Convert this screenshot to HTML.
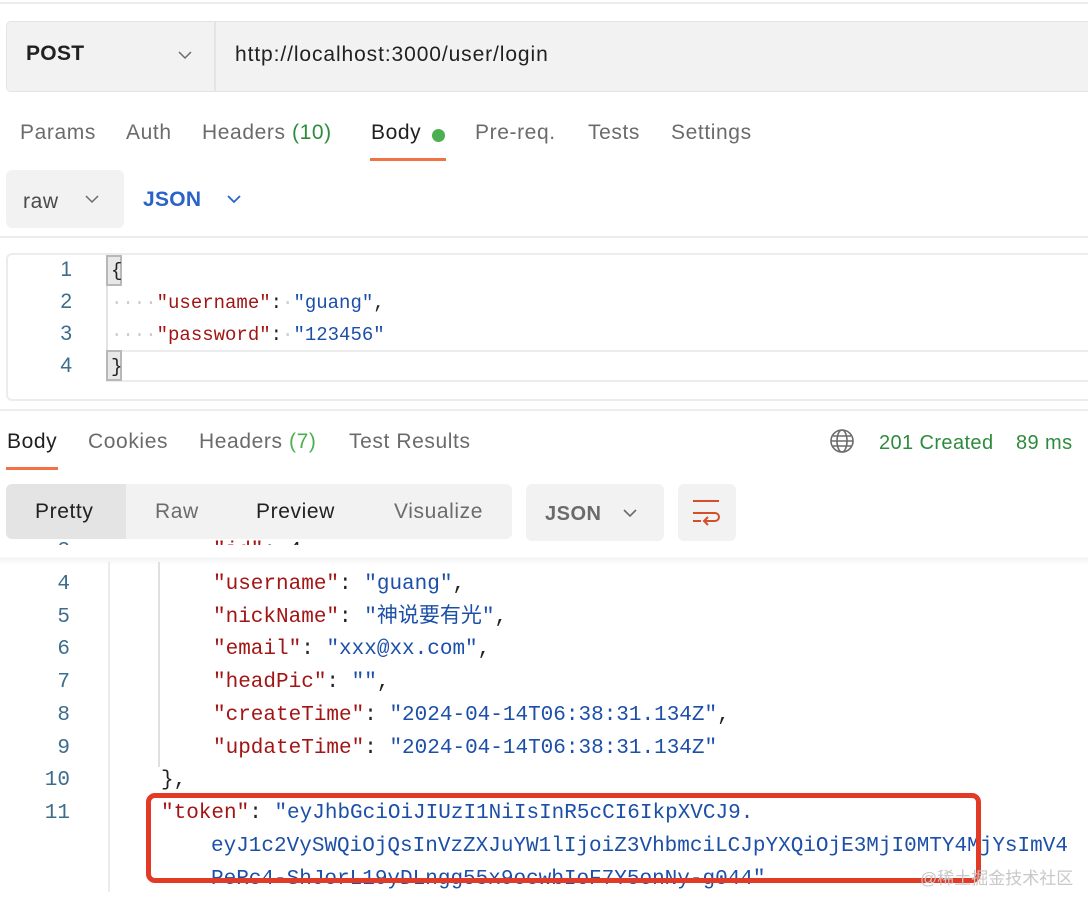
<!DOCTYPE html>
<html><head><meta charset="utf-8"><style>
*{margin:0;padding:0;box-sizing:border-box}
body{width:1088px;height:892px;background:#fff;position:relative;overflow:hidden;font-family:"Liberation Sans","Noto Sans CJK SC",sans-serif;color:#212121}
.a{position:absolute;white-space:nowrap}
.mono{font-family:"Liberation Mono","Noto Sans CJK SC",monospace}
.k{color:#a31515}.s{color:#1c4fa8}.ln{color:#3d6d8c;text-align:right;width:40px}
.t{font-size:21px;letter-spacing:0.6px}
.tab{font-size:21px;letter-spacing:0.6px;color:#6b6b6b}
</style></head><body>
<div class="a" style="left:0;top:2px;width:1088px;height:2px;background:#ececec"></div>
<div class="a" style="left:6px;top:21px;width:1090px;height:71px;background:#f2f2f2;border:1px solid #e4e4e4;border-radius:5px"></div>
<div class="a" style="left:214px;top:22px;width:2px;height:69px;background:#e4e4e4"></div>
<div class="a t" style="left:26px;top:42px;font-weight:bold;color:#212121;letter-spacing:0.3px">POST</div>
<svg class="a" style="left:177px;top:49px" width="16" height="12"><path d="M2 3l6 6 6-6" fill="none" stroke="#6b6b6b" stroke-width="1.5"/></svg>
<div class="a t" style="left:235px;top:43px;color:#212121;letter-spacing:0.9px">http://localhost:3000/user/login</div>
<div class="a tab" style="left:20px;top:121px">Params</div>
<div class="a tab" style="left:126px;top:121px">Auth</div>
<div class="a tab" style="left:202px;top:121px">Headers <span style="color:#2e8b3e">(10)</span></div>
<div class="a tab" style="left:371px;top:121px;color:#212121">Body</div>
<div class="a" style="left:432px;top:129px;width:13px;height:13px;border-radius:50%;background:#4caf50"></div>
<div class="a" style="left:370px;top:158px;width:76px;height:3px;background:#f07346"></div>
<div class="a tab" style="left:475px;top:121px">Pre-req.</div>
<div class="a tab" style="left:588px;top:121px">Tests</div>
<div class="a tab" style="left:671px;top:121px">Settings</div>
<div class="a" style="left:6px;top:170px;width:118px;height:58px;background:#f2f2f2;border-radius:6px"></div>
<div class="a t" style="left:23px;top:190px;color:#4a4a4a">raw</div>
<svg class="a" style="left:84px;top:193px" width="16" height="12"><path d="M2 3l6 6 6-6" fill="none" stroke="#6b6b6b" stroke-width="1.5"/></svg>
<div class="a t" style="left:143px;top:188px;font-weight:bold;color:#2a62c9;letter-spacing:0.3px">JSON</div>
<svg class="a" style="left:226px;top:193px" width="16" height="12"><path d="M2 3l6 6 6-6" fill="none" stroke="#2a62c9" stroke-width="1.8"/></svg>
<div class="a" style="left:0;top:236px;width:1088px;height:2px;background:#ececec"></div>
<div class="a" style="left:6px;top:253px;width:1090px;height:148px;border:2px solid #ececec;border-radius:6px"></div>
<div class="a" style="left:106px;top:350px;width:982px;height:2px;background:#ececec"></div>
<div class="a" style="left:106px;top:380px;width:982px;height:2px;background:#ececec"></div>
<div class="a" style="left:106px;top:256px;width:2px;height:124px;background:#e4e4e4"></div>
<div class="a" style="left:106px;top:255px;width:16px;height:31px;background:#e8e8e8;border:2px solid #b8b8b8"></div>
<div class="a" style="left:106px;top:350px;width:16px;height:31px;background:#e8e8e8;border:2px solid #b8b8b8"></div>
<div class="a" style="left:32px;top:254px;font-size:21px;line-height:32px">
<div class="ln">1</div><div class="ln">2</div><div class="ln">3</div><div class="ln">4</div></div>
<div class="a mono" style="left:111px;top:255px;font-size:19px;line-height:32px;color:#222">
<div>{</div>
<div><span style="color:#ccc">····</span><span class="k">"username"</span>:<span style="color:#ccc">·</span><span class="s">"guang"</span>,</div>
<div><span style="color:#ccc">····</span><span class="k">"password"</span>:<span style="color:#ccc">·</span><span class="s">"123456"</span></div>
<div>}</div></div>
<div class="a" style="left:0;top:409px;width:1088px;height:2px;background:#ececec"></div>
<div class="a tab" style="left:7px;top:430px;color:#212121">Body</div>
<div class="a" style="left:6px;top:467px;width:52px;height:3px;background:#f07346"></div>
<div class="a tab" style="left:88px;top:430px">Cookies</div>
<div class="a tab" style="left:199px;top:430px">Headers <span style="color:#4caf50">(7)</span></div>
<div class="a tab" style="left:349px;top:430px">Test Results</div>
<svg class="a" style="left:829px;top:428px" width="26" height="26" fill="none" stroke="#6b6b6b" stroke-width="1.6"><circle cx="13" cy="13" r="11"/><ellipse cx="13" cy="13" rx="5" ry="11"/><path d="M2 13h22M4 8h18M4 18h18"/></svg>
<div class="a" style="left:879px;top:432px;font-size:20px;letter-spacing:0.4px;color:#2e8b3e">201 Created</div>
<div class="a" style="left:1016px;top:432px;font-size:20px;letter-spacing:0.4px;color:#2e8b3e">89 ms</div>
<div class="a" style="left:6px;top:484px;width:506px;height:55px;background:#f2f2f2;border-radius:6px"></div>
<div class="a" style="left:6px;top:484px;width:120px;height:55px;background:#e4e4e4;border-radius:6px 0 0 6px"></div>
<div class="a t" style="left:35px;top:500px;color:#212121">Pretty</div>
<div class="a t" style="left:155px;top:500px;color:#6b6b6b">Raw</div>
<div class="a t" style="left:256px;top:500px;color:#212121">Preview</div>
<div class="a t" style="left:394px;top:500px;color:#6b6b6b">Visualize</div>
<div class="a" style="left:526px;top:484px;width:138px;height:57px;background:#f2f2f2;border-radius:6px"></div>
<div class="a" style="left:545px;top:503px;font-size:20px;letter-spacing:0.5px;font-weight:bold;color:#6b6b6b">JSON</div>
<svg class="a" style="left:622px;top:507px" width="16" height="12"><path d="M2 3l6 6 6-6" fill="none" stroke="#6b6b6b" stroke-width="1.6"/></svg>
<div class="a" style="left:678px;top:484px;width:58px;height:57px;background:#f2f2f2;border-radius:6px"></div>
<svg class="a" style="left:690px;top:498px" width="34" height="30" fill="none" stroke="#d2512a" stroke-width="2"><path d="M3 3h26M3 15h22a4 4 0 0 1 0 8h-10M3 23h8M18 19l-4 4 4 4"/></svg>
<div class="a mono" style="left:213px;top:536px;font-size:21px;line-height:32.7px;color:#222"><span class="k">"id"</span>: 4,</div>
<div class="a ln mono" style="left:30px;top:536px;font-size:21px;line-height:32.7px">3</div>
<div class="a" style="left:0;top:545px;width:1088px;height:20px;background:linear-gradient(#fff 0,#fff 12px,#f3f3f3 13px,#fff 20px)"></div>
<div class="a" style="left:108px;top:562px;width:2px;height:330px;background:#ececec"></div>
<div class="a" style="left:158px;top:562px;width:2px;height:205px;background:#e0e0e0"></div>
<div class="a mono" style="left:30px;top:569px;font-size:21px;line-height:32.7px">
<div class="ln">4</div><div class="ln">5</div><div class="ln">6</div><div class="ln">7</div><div class="ln">8</div><div class="ln">9</div><div class="ln">10</div><div class="ln">11</div></div>
<div class="a mono" style="left:213px;top:569px;font-size:21px;line-height:32.7px;color:#222">
<div><span class="k">"username"</span>: <span class="s">"guang"</span>,</div>
<div><span class="k">"nickName"</span>: <span class="s">"神说要有光"</span>,</div>
<div><span class="k">"email"</span>: <span class="s">"xxx@xx.com"</span>,</div>
<div><span class="k">"headPic"</span>: <span class="s">""</span>,</div>
<div><span class="k">"createTime"</span>: <span class="s">"2024-04-14T06:38:31.134Z"</span>,</div>
<div><span class="k">"updateTime"</span>: <span class="s">"2024-04-14T06:38:31.134Z"</span></div></div>
<div class="a mono" style="left:161px;top:765px;font-size:21px;line-height:32.7px;color:#222">},</div>
<div class="a mono" style="left:161px;top:798px;font-size:21px;line-height:32.7px;color:#222"><span class="k">"token"</span>: <span class="s">"eyJhbGciOiJIUzI1NiIsInR5cCI6IkpXVCJ9.</span></div>
<div class="a mono s" style="left:211px;top:831px;font-size:21px;line-height:32.7px">eyJ1c2VySWQiOjQsInVzZXJuYW1lIjoiZ3VhbmciLCJpYXQiOjE3MjI0MTY4MjYsImV4</div>
<div class="a mono s" style="left:211px;top:864px;font-size:21px;line-height:32.7px">PeRc4-ShJorL19yDLngg55x9ocwbIoF7Y5onNy-g044"</div>
<div class="a" style="left:146px;top:793px;width:835px;height:90px;border:5px solid #e33a25;border-radius:9px"></div>
<div class="a" style="left:920px;top:864px;font-size:17px;color:#c8c8c8">@稀土掘金技术社区</div>
</body></html>
